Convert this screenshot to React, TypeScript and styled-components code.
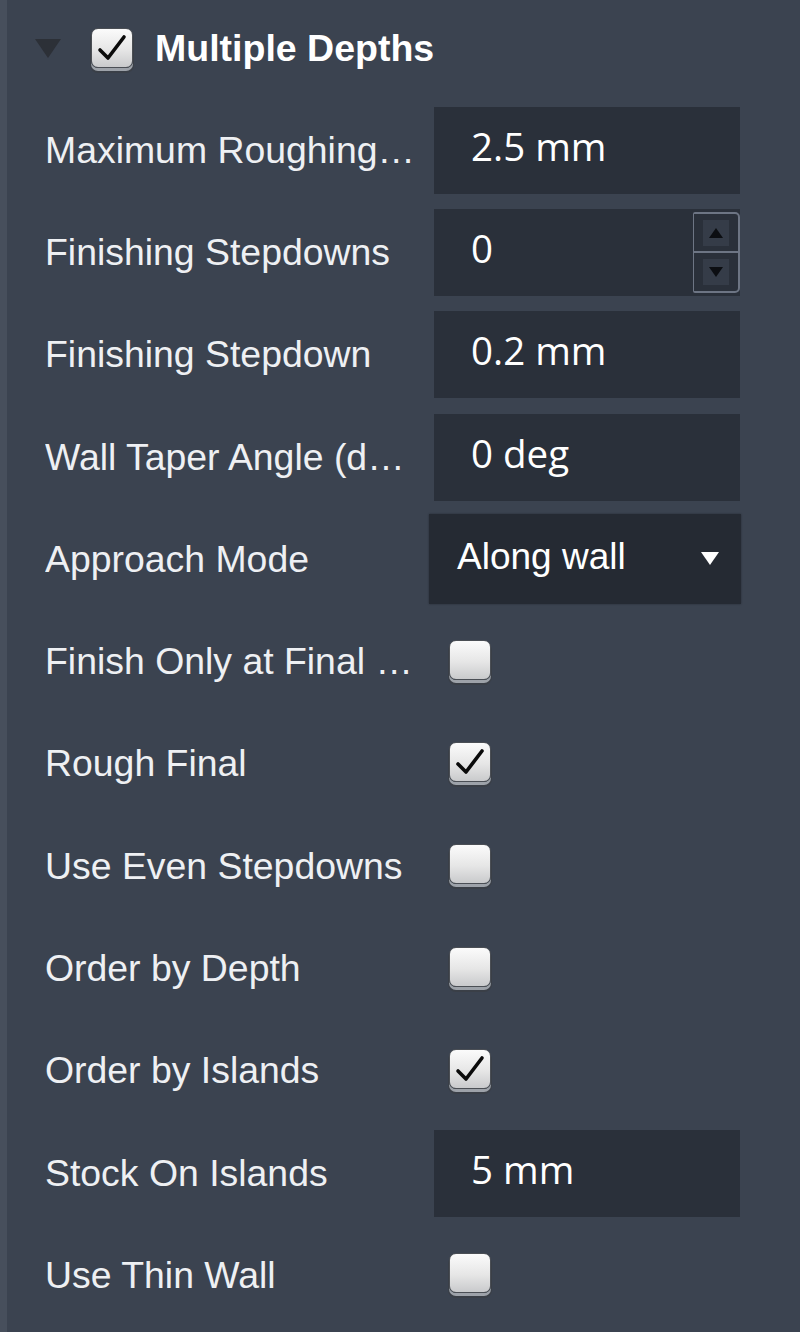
import React from "react";
import styled, { createGlobalStyle } from "styled-components";

const Global = createGlobalStyle`
  html, body { margin: 0; padding: 0; background: #3b4350; }
  body { width: 800px; height: 1332px; overflow: hidden; }
`;

const Panel = styled.div`
  width: 800px;
  height: 1332px;
  background: #3b4350;
  border-left: 7px solid #474f5c;
  box-sizing: border-box;
  font-family: "Liberation Sans", Arial, sans-serif;
  color: #eef0f3;
  display: flex;
  flex-direction: column;
`;

const Header = styled.div`
  height: 99px;
  display: flex;
  align-items: center;
  padding-left: 28px;
`;

const Caret = styled.div`
  width: 0;
  height: 0;
  border-left: 13px solid transparent;
  border-right: 13px solid transparent;
  border-top: 19px solid #2c3037;
  margin-right: 30px;
  margin-top: -2px;
`;

const HeaderTitle = styled.span`
  font-weight: bold;
  font-size: 37.5px;
  margin-left: 22px;
  margin-top: -3px;
  color: #ffffff;
`;

const Row = styled.div`
  height: 102.3px;
  display: flex;
  align-items: center;
  padding-left: 38px;
`;

const Label = styled.div`
  width: 373px;
  font-size: 37.4px;
  white-space: nowrap;
  overflow: hidden;
  text-overflow: ellipsis;
  margin-right: 16px;
  color: #eef0f3;
`;

const Field = styled.div`
  position: relative;
  width: 306px;
  height: 87px;
  background: #2a303a;
  display: flex;
  align-items: center;
  padding-left: 37px;
  box-sizing: border-box;
  font-family: "Open Sans", sans-serif;
  font-size: 38.5px;
  color: #ffffff;
  padding-bottom: 9px;
`;

const Spinner = styled.div`
  position: absolute;
  right: 0;
  top: 3px;
  width: 47px;
  height: 81px;
  box-sizing: border-box;
  border: 2px solid #6d7584;
  border-left-width: 1px;
  border-radius: 2px 5px 5px 2px;
  display: flex;
  flex-direction: column;
`;

const SpinButton = styled.div<{ $down?: boolean }>`
  flex: 1;
  display: flex;
  align-items: center;
  justify-content: center;
  border-top: ${(p) => (p.$down ? "2px solid #6d7584" : "none")};
  &::before {
    content: "";
    width: 26px;
    height: 26px;
    background: #353c48;
    position: absolute;
  }
  &::after {
    content: "";
    position: relative;
    width: 0;
    height: 0;
    border-left: 7px solid transparent;
    border-right: 7px solid transparent;
    ${(p) =>
      p.$down
        ? "border-top: 10px solid #0c0e12;"
        : "border-bottom: 10px solid #0c0e12;"}
  }
`;

const Select = styled.div`
  width: 312px;
  height: 90px;
  margin-left: -5px;
  background: #252a33;
  box-shadow: 0 0 2px rgba(0, 0, 0, 0.35);
  display: flex;
  align-items: center;
  justify-content: space-between;
  padding: 0 22px 4px 28px;
  box-sizing: border-box;
  font-size: 37px;
  color: #ffffff;
`;

const SelectArrow = styled.span`
  width: 0;
  height: 0;
  border-left: 9px solid transparent;
  border-right: 9px solid transparent;
  border-top: 13px solid #ffffff;
  margin-top: 2px;
`;

const CheckFace = styled.div`
  width: 42px;
  height: 40px;
  box-sizing: border-box;
  border-radius: 7px;
  border: 1.5px solid #4b4f55;
  background: linear-gradient(#fbfbfb, #e6e6e6 55%, #c9cacc);
  box-shadow: 0 3px 0 0 #9da2a9, 0 4px 0 1px #3a3f47;
  display: flex;
  align-items: center;
  justify-content: center;
  margin-top: -4px;
`;

const CheckSlot = styled.div`
  margin-left: 15px;
  display: flex;
  align-items: center;
`;

const Tick = () => (
  <svg width="30" height="28" viewBox="0 0 30 28">
    <path
      d="M3 16 L11 24 L27 3"
      fill="none"
      stroke="#0b0b0b"
      strokeWidth="3.6"
      strokeLinecap="round"
      strokeLinejoin="round"
    />
  </svg>
);

const Checkbox = ({ checked }: { checked?: boolean }) => (
  <CheckFace>{checked ? <Tick /> : null}</CheckFace>
);

type Item =
  | { kind: "text"; label: string; value: string }
  | { kind: "spin"; label: string; value: string }
  | { kind: "select"; label: string; value: string }
  | { kind: "check"; label: string; checked: boolean };

const items: Item[] = [
  { kind: "text", label: "Maximum Roughing Stepdown", value: "2.5 mm" },
  { kind: "spin", label: "Finishing Stepdowns", value: "0" },
  { kind: "text", label: "Finishing Stepdown", value: "0.2 mm" },
  { kind: "text", label: "Wall Taper Angle (deg)", value: "0 deg" },
  { kind: "select", label: "Approach Mode", value: "Along wall" },
  { kind: "check", label: "Finish Only at Final Depth", checked: false },
  { kind: "check", label: "Rough Final", checked: true },
  { kind: "check", label: "Use Even Stepdowns", checked: false },
  { kind: "check", label: "Order by Depth", checked: false },
  { kind: "check", label: "Order by Islands", checked: true },
  { kind: "text", label: "Stock On Islands", value: "5 mm" },
  { kind: "check", label: "Use Thin Wall", checked: false },
];

export default function App() {
  return (
    <>
      <Global />
      <Panel>
        <Header>
          <Caret />
          <Checkbox checked />
          <HeaderTitle>Multiple Depths</HeaderTitle>
        </Header>
        {items.map((it) => (
          <Row key={it.label}>
            <Label title={it.label}>{it.label}</Label>
            {it.kind === "text" && <Field>{it.value}</Field>}
            {it.kind === "spin" && (
              <Field>
                {it.value}
                <Spinner>
                  <SpinButton />
                  <SpinButton $down />
                </Spinner>
              </Field>
            )}
            {it.kind === "select" && (
              <Select>
                {it.value}
                <SelectArrow />
              </Select>
            )}
            {it.kind === "check" && (
              <CheckSlot>
                <Checkbox checked={it.checked} />
              </CheckSlot>
            )}
          </Row>
        ))}
      </Panel>
    </>
  );
}
